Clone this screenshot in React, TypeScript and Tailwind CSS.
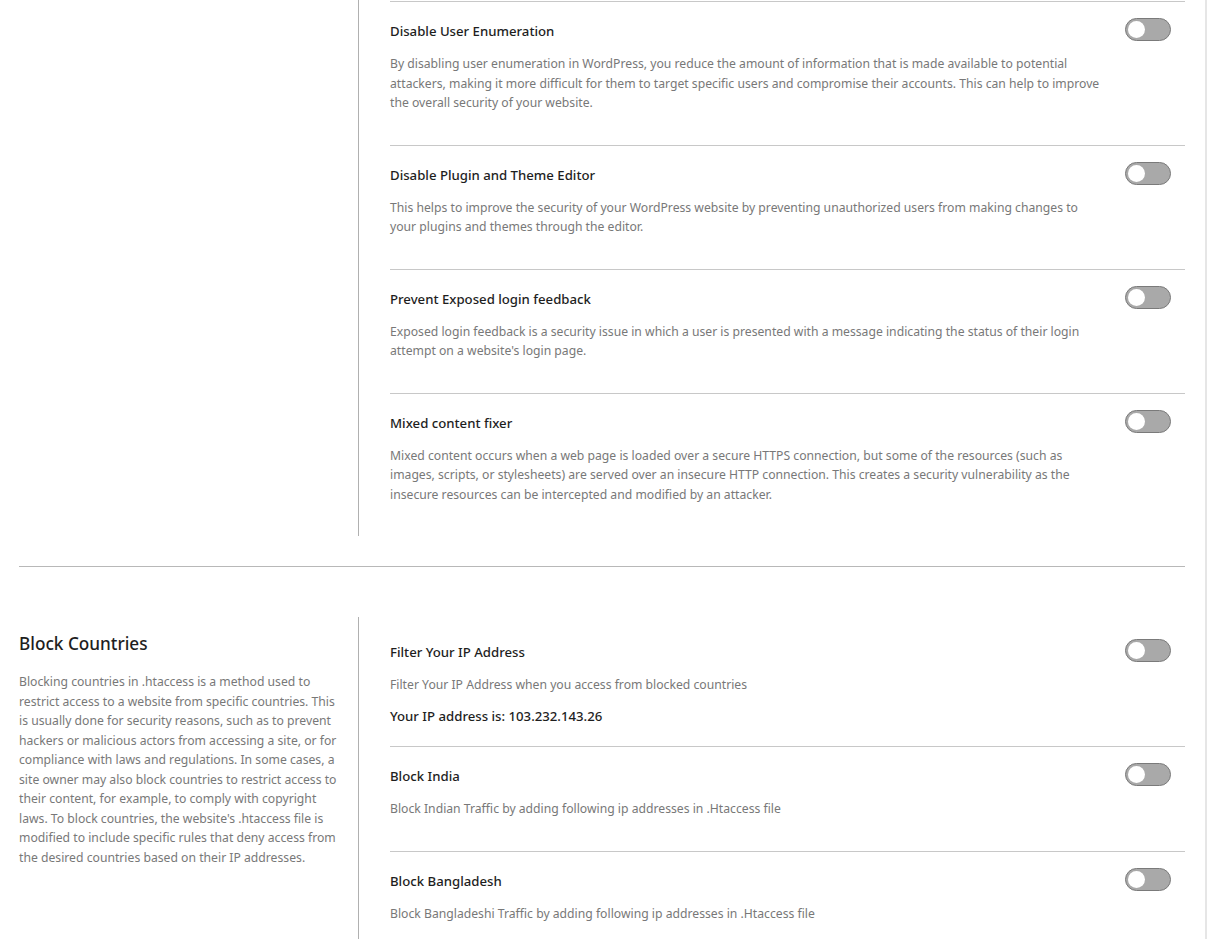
import React from "react";

const Toggle = () => (
  <div className="mt-[-3px] mr-[14px] h-[23px] w-[46px] shrink-0 rounded-full border-[1.5px] border-[#7a7a7a] bg-[#a9a9a9] p-[2px]">
    <div className="h-[17px] w-[17px] rounded-full bg-white" />
  </div>
);

type RowProps = {
  title: string;
  desc: string;
  topBorder?: boolean;
  extra?: React.ReactNode;
  pt?: string;
};

const Row = ({ title, desc, topBorder = true, extra, pt = "pt-[19px]" }: RowProps) => (
  <div className={`${topBorder ? "border-t border-[#c8c8c8]" : ""} ${pt} pb-[20px]`}>
    <div className="flex items-start justify-between">
      <div className="w-[712px]">
        <div className="text-[13.2px] leading-[20px] font-medium text-[#1e1e1e]">{title}</div>
        <p className="mt-[13px] mb-[12px] text-[12.2px] leading-[19.5px] text-[#787878]">{desc}</p>
        {extra}
      </div>
      <Toggle />
    </div>
  </div>
);

export default function App() {
  return (
    <div
      className="min-h-[939px] w-[1207px] bg-white"
      style={{ fontFamily: '"Noto Sans", "Open Sans", sans-serif' }}
    >
      <div className="flex min-h-[939px]">
        <div className="flex-1 pl-[19px] pr-[20px]">
          {/* Section 1 */}
          <div className="flex">
            <div className="w-[340px] shrink-0 border-r border-[#b0b0b0] pr-[20px]" />
            <div className="flex-1 pl-[31px] pt-[1px]">
              <Row
                title="Disable User Enumeration"
                desc="By disabling user enumeration in WordPress, you reduce the amount of information that is made available to potential attackers, making it more difficult for them to target specific users and compromise their accounts. This can help to improve the overall security of your website."
              />
              <Row
                title="Disable Plugin and Theme Editor"
                desc="This helps to improve the security of your WordPress website by preventing unauthorized users from making changes to your plugins and themes through the editor."
              />
              <Row
                title="Prevent Exposed login feedback"
                desc="Exposed login feedback is a security issue in which a user is presented with a message indicating the status of their login attempt on a website's login page."
              />
              <Row
                title="Mixed content fixer"
                desc="Mixed content occurs when a web page is loaded over a secure HTTPS connection, but some of the resources (such as images, scripts, or stylesheets) are served over an insecure HTTP connection. This creates a security vulnerability as the insecure resources can be intercepted and modified by an attacker."
              />
            </div>
          </div>

          <div className="mt-[30px] mb-[50px] border-t border-[#b8b8b8]" />

          {/* Section 2 */}
          <div className="flex">
            <div className="w-[340px] shrink-0 border-r border-[#b0b0b0] pr-[20px] pt-[14px]">
              <h2 className="text-[17.2px] leading-[26px] font-medium text-[#1e1e1e]">Block Countries</h2>
              <p className="mt-[15px] text-[12.2px] leading-[19.5px] text-[#787878]">
                Blocking countries in .htaccess is a method used to restrict access to a website from specific countries. This is usually done for security reasons, such as to prevent hackers or malicious actors from accessing a site, or for compliance with laws and regulations. In some cases, a site owner may also block countries to restrict access to their content, for example, to comply with copyright laws. To block countries, the website's .htaccess file is modified to include specific rules that deny access from the desired countries based on their IP addresses.
              </p>
            </div>
            <div className="flex-1 pl-[31px]">
              <Row
                topBorder={false}
                pt="pt-[25px]"
                title="Filter Your IP Address"
                desc="Filter Your IP Address when you access from blocked countries"
                extra={
                  <div className="text-[13.2px] leading-[19.5px] font-medium text-[#1e1e1e]">
                    Your IP address is: 103.232.143.26
                  </div>
                }
              />
              <Row
                title="Block India"
                desc="Block Indian Traffic by adding following ip addresses in .Htaccess file"
              />
              <Row
                title="Block Bangladesh"
                desc="Block Bangladeshi Traffic by adding following ip addresses in .Htaccess file"
              />
            </div>
          </div>
        </div>
        <div className="w-[2px] bg-[#e6e6e6]" />
      </div>
    </div>
  );
}
